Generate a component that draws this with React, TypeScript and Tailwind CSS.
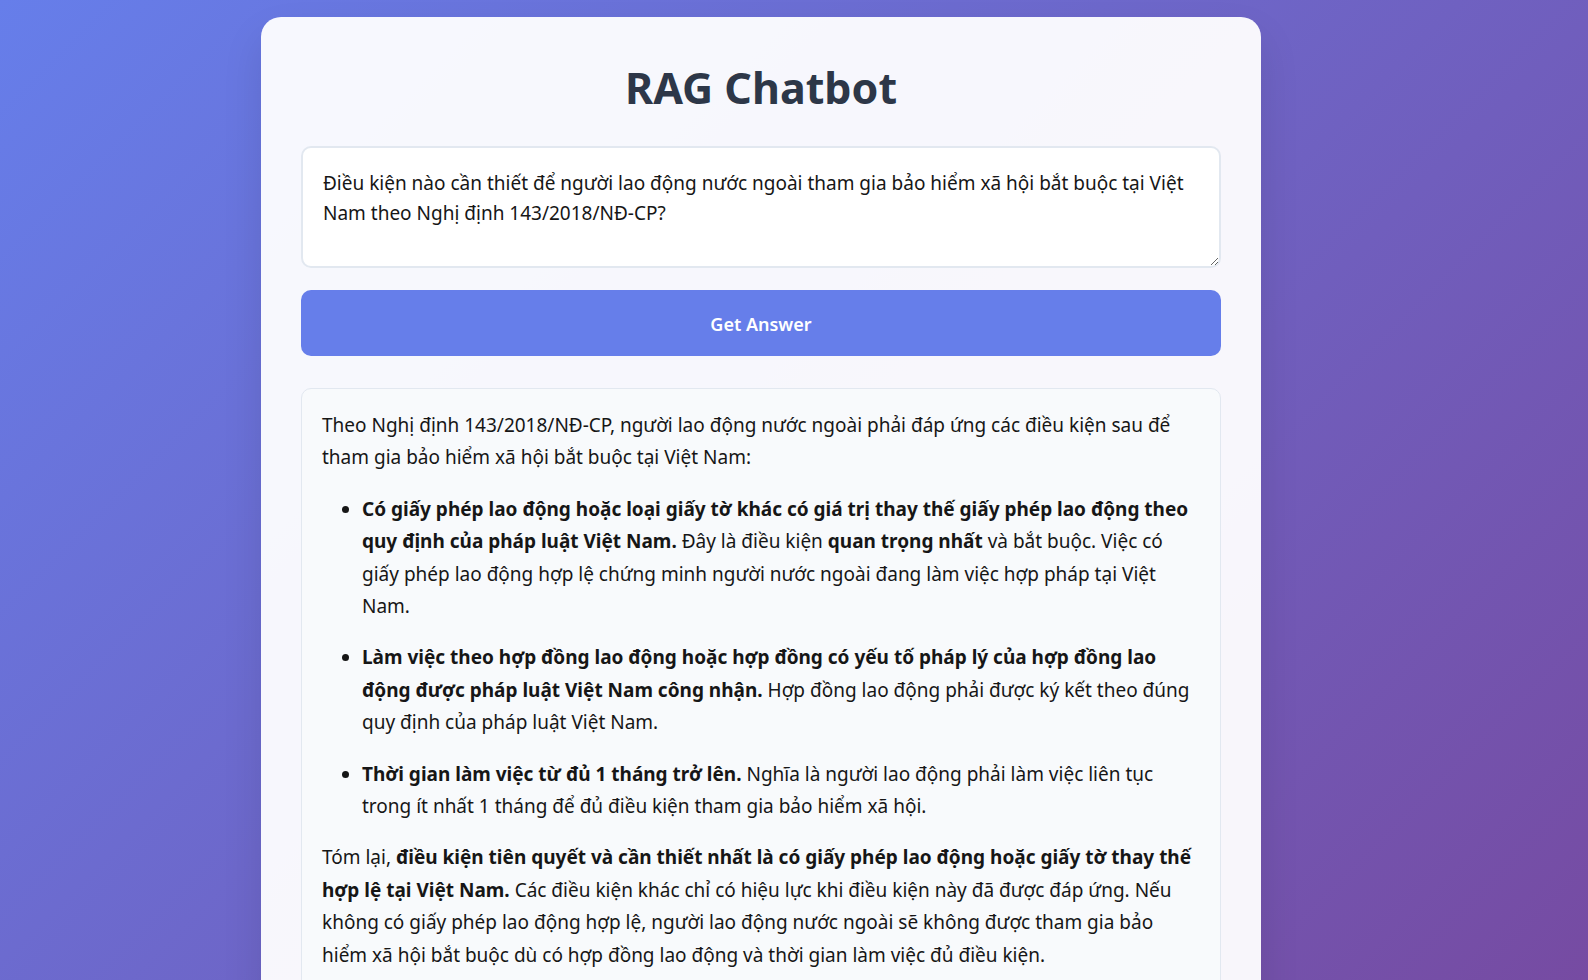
import { useState } from "react";

const font = { fontFamily: '"Noto Sans", "Open Sans", sans-serif' };

export default function App() {
  const [question, setQuestion] = useState(
    "Điều kiện nào cần thiết để người lao động nước ngoài tham gia bảo hiểm xã hội bắt buộc tại Việt Nam theo Nghị định 143/2018/NĐ-CP?"
  );

  return (
    <div
      className="min-h-screen bg-[linear-gradient(135deg,#667eea_0%,#764ba2_100%)] bg-fixed pl-[261px] pt-[17px]"
      style={font}
    >
      <div className="w-[1000px] rounded-[20px] bg-white/95 px-10 pb-10 pt-[42px] shadow-[0_20px_40px_rgba(0,0,0,0.1)]">
        <h1 className="mb-[30px] text-center text-[43px] font-bold leading-[57px] text-[#2d3748]">
          RAG Chatbot
        </h1>

        <textarea
          value={question}
          onChange={(e) => setQuestion(e.target.value)}
          className="block h-[122px] w-full rounded-[10px] border-2 border-[#e2e8f0] bg-white px-5 py-5 text-[19px] leading-[30.4px] text-[#161616] outline-none"
        />

        <button className="mt-[22px] block h-[66px] w-full rounded-[10px] bg-[#667eea] pt-[3px] text-[18px] font-semibold text-white">
          Get Answer
        </button>

        <div className="mt-[32px] rounded-[10px] border border-[#e2e8f0] bg-[#f8fafc] p-5 text-[19px] leading-[32.4px] text-[#161616]">
          <p className="mb-[19px]">
            Theo Nghị định 143/2018/NĐ-CP, người lao động nước ngoài phải đáp ứng các điều kiện sau để
            tham gia bảo hiểm xã hội bắt buộc tại Việt Nam:
          </p>
          <ul className="mb-[19px] list-disc pl-10">
            <li className="mb-[19px]">
              <b>
                Có giấy phép lao động hoặc loại giấy tờ khác có giá trị thay thế giấy phép lao động theo
                quy định của pháp luật Việt Nam.
              </b>{" "}
              Đây là điều kiện <b>quan trọng nhất</b> và bắt buộc. Việc có giấy phép lao động hợp lệ
              chứng minh người nước ngoài đang làm việc hợp pháp tại Việt Nam.
            </li>
            <li className="mb-[19px]">
              <b>
                Làm việc theo hợp đồng lao động hoặc hợp đồng có yếu tố pháp lý của hợp đồng lao động được
                pháp luật Việt Nam công nhận.
              </b>{" "}
              Hợp đồng lao động phải được ký kết theo đúng quy định của pháp luật Việt Nam.
            </li>
            <li>
              <b>Thời gian làm việc từ đủ 1 tháng trở lên.</b> Nghĩa là người lao động phải làm việc liên
              tục trong ít nhất 1 tháng để đủ điều kiện tham gia bảo hiểm xã hội.
            </li>
          </ul>
          <p>
            Tóm lại,{" "}
            <b>
              điều kiện tiên quyết và cần thiết nhất là có giấy phép lao động hoặc giấy tờ thay thế hợp lệ
              tại Việt Nam.
            </b>{" "}
            Các điều kiện khác chỉ có hiệu lực khi điều kiện này đã được đáp ứng. Nếu không có giấy phép
            lao động hợp lệ, người lao động nước ngoài sẽ không được tham gia bảo hiểm xã hội bắt buộc dù
            có hợp đồng lao động và thời gian làm việc đủ điều kiện.
          </p>
        </div>
      </div>
    </div>
  );
}
